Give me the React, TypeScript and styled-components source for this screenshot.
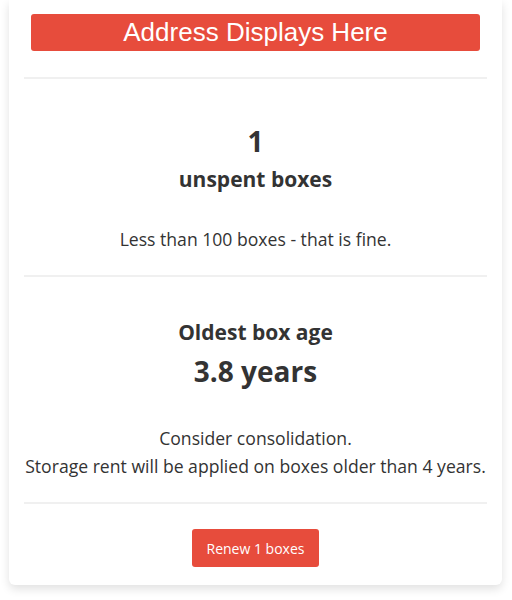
import React from "react";
import styled, { createGlobalStyle } from "styled-components";

const Global = createGlobalStyle`
  html, body { margin: 0; padding: 0; background: #ffffff; }
  body { font-family: "Open Sans", "Noto Sans", sans-serif; color: #333333; }
`;

const Page = styled.div`
  padding: 0 10px 15px 9px;
`;

const Card = styled.div`
  background: #fff;
  border-radius: 0 0 6px 6px;
  box-shadow: 0 4px 10px rgba(0, 0, 0, 0.12);
  padding: 14px 15px 18px;
  display: flex;
  flex-direction: column;
  align-items: stretch;
`;

const AddressBar = styled.div`
  margin: 0 7px;
  height: 37px;
  background: #e74c3c;
  border-radius: 3px;
  color: #fff;
  font-family: "Liberation Sans", Arial, sans-serif;
  font-size: 26px;
  display: flex;
  align-items: center;
  justify-content: center;
`;

const Divider = styled.hr<{ $top: number }>`
  border: 0;
  border-top: 2px solid #f0f0f0;
  margin: ${(p) => p.$top}px 0 0;
`;

const Section = styled.div<{ $pt: number; $pb: number }>`
  text-align: center;
  padding: ${(p) => p.$pt}px 0 ${(p) => p.$pb}px;
  display: flex;
  flex-direction: column;
  align-items: center;
`;

const Big = styled.div<{ $mt?: number }>`
  font-size: 28px;
  font-weight: 700;
  line-height: 38px;
  margin-top: ${(p) => p.$mt ?? 0}px;
`;

const Label = styled.div<{ $mt?: number }>`
  font-size: 21px;
  font-weight: 700;
  line-height: 28px;
  margin-top: ${(p) => p.$mt ?? 0}px;
`;

const Note = styled.div<{ $mt: number }>`
  font-size: 17.6px;
  line-height: 28px;
  margin-top: ${(p) => p.$mt}px;
`;

const RenewButton = styled.button`
  background: #e74c3c;
  color: #fff;
  border: 0;
  border-radius: 3px;
  font-family: "Open Sans", "Noto Sans", sans-serif;
  font-size: 14px;
  height: 38px;
  padding: 0 15px;
  cursor: pointer;
`;

export default function App() {
  return (
    <Page>
      <Global />
      <Card>
        <AddressBar>Address Displays Here</AddressBar>
        <Divider $top={26} />
        <Section $pt={43} $pb={22}>
          <Big>1</Big>
          <Label $mt={5}>unspent boxes</Label>
          <Note $mt={32}>Less than 100 boxes - that is fine.</Note>
        </Section>
        <Divider $top={0} />
        <Section $pt={41} $pb={22}>
          <Label>Oldest box age</Label>
          <Big $mt={6}>3.8 years</Big>
          <Note $mt={34}>
            Consider consolidation.
            <br />
            Storage rent will be applied on boxes older than 4 years.
          </Note>
        </Section>
        <Divider $top={0} />
        <Section $pt={25} $pb={0}>
          <RenewButton>Renew 1 boxes</RenewButton>
        </Section>
      </Card>
    </Page>
  );
}
